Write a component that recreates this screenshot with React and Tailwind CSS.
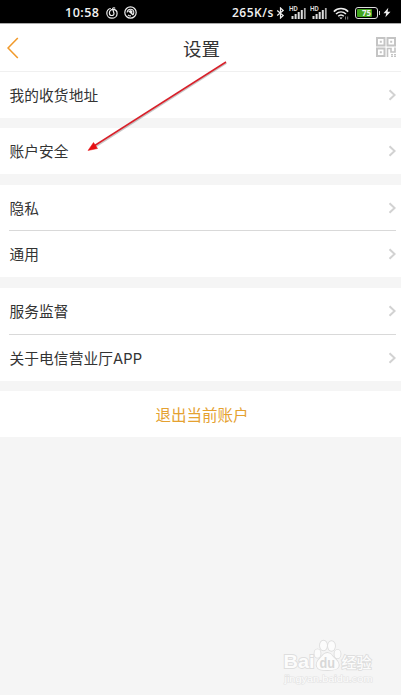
const cjk = "font-[Inter,'Noto_Sans_CJK_SC',sans-serif]";

const groups = [
  { items: ["我的收货地址"], className: "[&_span]:pt-[2px]" },
  { items: ["账户安全"], className: "mt-[10px] [&_span]:pt-[3px]" },
  { items: ["隐私", "通用"], className: "mt-[11px] [&_span]:pt-[3px]" },
  { items: ["服务监督", "关于电信营业厅APP"], className: "mt-[11px] [&_span]:pt-[2px] [&>div:first-child]:h-[47px]" },
];

function StatusBar() {
  return (
    <div className="flex h-[23px] items-center bg-black pl-[65px] font-['Open_Sans',sans-serif] text-[#f2f2f2]">
      <span className="w-[35px] pt-[3px] text-[12.5px] leading-none font-semibold tracking-[0.5px] whitespace-nowrap">10:58</span>
      <svg className="mt-[2px] ml-[6px] h-3 w-3 shrink-0" viewBox="0 0 12 12" fill="none" stroke="#eee" strokeWidth="1.2" strokeLinecap="round">
        <path d="M4.3 1.5C2 2.2.8 4 .8 6.3c0 2.8 2.3 4.9 5.1 4.9s5.2-2 5.2-4.8c0-2.5-1.8-4-4.1-4-2 0-3.6 1.5-3.6 3.5 0 1.6 1.1 2.6 2.5 2.6S8.2 7.5 7.9 6.2L6.7 2c-.2-.9.9-1.6 2-1" />
      </svg>
      <svg className="mt-[2px] ml-[6px] h-[13px] w-[13px] shrink-0" viewBox="0 0 13 13" fill="none" stroke="#eee">
        <circle cx="6.5" cy="6.5" r="5.7" strokeWidth="1.2" />
        <path d="M3.2 6.5a3.3 3.3 0 0 1 6.6 0c0 1-.4 1.8-1 2.5M4 8.8a3.3 3.3 0 0 0 3 1" strokeWidth="1.1" />
        <path d="M4.6 4.7l4.6 4.3M6.3 4.3l2 2.3" strokeWidth="1.5" />
      </svg>
      <span className="ml-[95px] w-[42px] pt-[3px] text-[12px] leading-none font-semibold tracking-[0.5px] whitespace-nowrap">265K/s</span>
      <svg className="mt-[2px] ml-[2px] h-3 w-[9px] shrink-0" viewBox="0 0 9 12" fill="none" stroke="#eee" strokeWidth="1.2">
        <path d="M1.2 3.5l6 5L4.5 11V1l2.7 2.5-6 5" />
      </svg>
      <Signal />
      <Signal />
      <svg className="mt-[3px] ml-[6px] h-[13px] w-4 shrink-0" viewBox="0 0 16 13" fill="none" stroke="#eee" strokeWidth="1.5">
        <path d="M.8 4.6c4-4 10.4-4 14.4 0M3 7c3-2.8 7-2.8 10 0M5.2 9.3c1.6-1.5 4-1.5 5.6 0" />
        <path d="M6.4 10.4h3.2L8 12.3z" fill="#eee" stroke="none" />
        <path d="M12.5 9.5v3M14.7 9.5v3" strokeWidth=".8" stroke="#999" />
      </svg>
      <div className="relative mt-[2px] ml-[6px] h-[12px] w-[23px] shrink-0 rounded-[3px] border border-[#ddd] p-px">
        <div className="h-full w-[15px] rounded-[1px] bg-[#42a51d]" />
        <span className="absolute inset-0 text-center text-[8px] leading-[10px] font-bold">75</span>
      </div>
      <div className="mt-[2px] ml-px h-1 w-px shrink-0 bg-[#ccc]" />
      <svg className="mt-[2px] ml-[3px] h-[11px] w-[8px] shrink-0" viewBox="0 0 8 11" fill="#eee">
        <path d="M5.3.8L.5 6.2h2.7l-.8 4L7.5 4.7H4.6z" />
      </svg>
    </div>
  );
}

function Signal() {
  return (
    <svg className="mt-[2px] ml-[4px] h-[14px] w-[17px] shrink-0" viewBox="0 0 17 14" fill="#ddd">
      <text x="0" y="5" fontSize="6.5" fontWeight="600" fontFamily="Roboto, sans-serif">HD</text>
      <path d="M2.5 10h2v3h-2zM5.6 8h2v5h-2zM8.7 6h2v7h-2zM11.8 4h2v9h-2z" />
      <path d="M14.9 2h1.8v11h-1.8z" fill="#aaa" />
    </svg>
  );
}

function QrIcon() {
  return (
    <svg className="-mt-[2px] h-5 w-5" viewBox="0 0 20 20" fill="none" stroke="#c4c4c4" strokeWidth="2">
      <path d="M1 1h7.5v7.5H1zM11.5 1H19v7.5h-7.5zM1 11.5h7.5V19H1z" />
      <path d="M3.8 3.8h2v2h-2zM14.2 3.8h2v2h-2zM3.8 14.2h2v2h-2z" fill="#c4c4c4" stroke="none" />
      <path d="M11.5 20v-8.500h3.500V15h4v-4.500M15 17.800h2M18 17.800h2M15 19.700h2M18 19.700h2" strokeWidth="1.6" />
    </svg>
  );
}

function Row({ label, divider }) {
  return (
    <div className={"mr-[5px] ml-[9px] flex h-[46px] items-center justify-between pl-[0.5px] " + (divider ? "border-b border-[#d9d9d9]" : "")}>
      <span className="text-[14.7px] leading-none tracking-[0.1px] text-[#333]">{label}</span>
      <svg className="h-3 w-2" viewBox="0 0 8 12" fill="none" stroke="#d2d2d2" strokeWidth="2">
        <path d="M1.5 1.2L6.6 6l-5.1 4.8" />
      </svg>
    </div>
  );
}

function Watermark() {
  return (
    <svg className="absolute top-[636px] left-[280px] h-[52px] w-[100px]" viewBox="0 0 100 52" fill="#fcfcfc" stroke="#dedede" strokeWidth="1.8" paintOrder="stroke">
      <g fontFamily="'Liberation Sans', sans-serif" fontWeight="700">
        <text x="3.5" y="32.3" fontSize="19" textLength="31" lengthAdjust="spacingAndGlyphs">Bai</text>
        <ellipse cx="37.5" cy="17.5" rx="3" ry="4.2" />
        <ellipse cx="43.5" cy="9.5" rx="3.5" ry="4.8" />
        <ellipse cx="51.5" cy="10" rx="3.5" ry="4.8" />
        <ellipse cx="57.5" cy="18" rx="3" ry="4.2" />
        <path d="M47.5 17c-3.5 0-5 3-7.5 5.5-3 3-4 5-3 8 1 3 4 3.5 10.5 3.5s10-.5 11-3.5c.8-3-.5-5-3.5-7.8C52 20 51 17 47.5 17z" />
        <text x="39.5" y="31.5" fontSize="14" fill="#d8d8d8" stroke="none" textLength="15.5" lengthAdjust="spacingAndGlyphs">du</text>
        <text x="61.5" y="31.5" fontSize="15" fontWeight="500" fontFamily="'Noto Sans CJK SC', sans-serif" textLength="30">经验</text>
      </g>
      <text x="4.5" y="46" fontSize="9.5" fontFamily="'Liberation Sans', sans-serif" strokeWidth="1.2" stroke="#e4e4e4" textLength="88" lengthAdjust="spacingAndGlyphs">jingyan.baidu.com</text>
    </svg>
  );
}

export default function App() {
  return (
    <main className={"relative h-[695px] w-[401px] overflow-hidden bg-[#f5f5f5] " + cjk}>
      <StatusBar />
      <header className="flex h-[49px] items-center justify-between border-t border-b border-t-[#aaa] border-b-[#f0f0f0] bg-white pr-[5px] pl-[7px]">
        <svg className="h-[22px] w-5" viewBox="0 0 20 22" fill="none" stroke="#f19a2b" strokeWidth="1.6">
          <path d="M10.8 1L1 11l9.8 10" />
        </svg>
        <h1 className="pt-[3px] text-[18.5px] leading-none text-[#333]">设置</h1>
        <QrIcon />
      </header>

      {groups.map((group) => (
        <section key={group.items[0]} className={"bg-white " + group.className}>
          {group.items.map((label, i) => (
            <Row key={label} label={label} divider={i < group.items.length - 1} />
          ))}
        </section>
      ))}

      <button className="mt-[10px] flex h-[46px] w-full items-center justify-center bg-white pt-[3px] pl-[3px] text-[15.5px] leading-none text-[#e5a130]">
        退出当前账户
      </button>

      {/* Pointer to the account security row */}
      <svg className="pointer-events-none absolute top-[55px] left-[80px] h-[105px] w-[155px]" viewBox="80 55 155 105">
        <path d="M226.5 63.2L95 147.2" stroke="#000" strokeOpacity=".22" strokeWidth="1.5" />
        <path d="M226 62L94 146" stroke="#d8202a" strokeWidth="1.5" />
        <path d="M88 150.5l5.5-8 4 6z" fill="#e60f12" stroke="#e60f12" strokeWidth=".5" />
      </svg>

      <Watermark />
    </main>
  );
}
